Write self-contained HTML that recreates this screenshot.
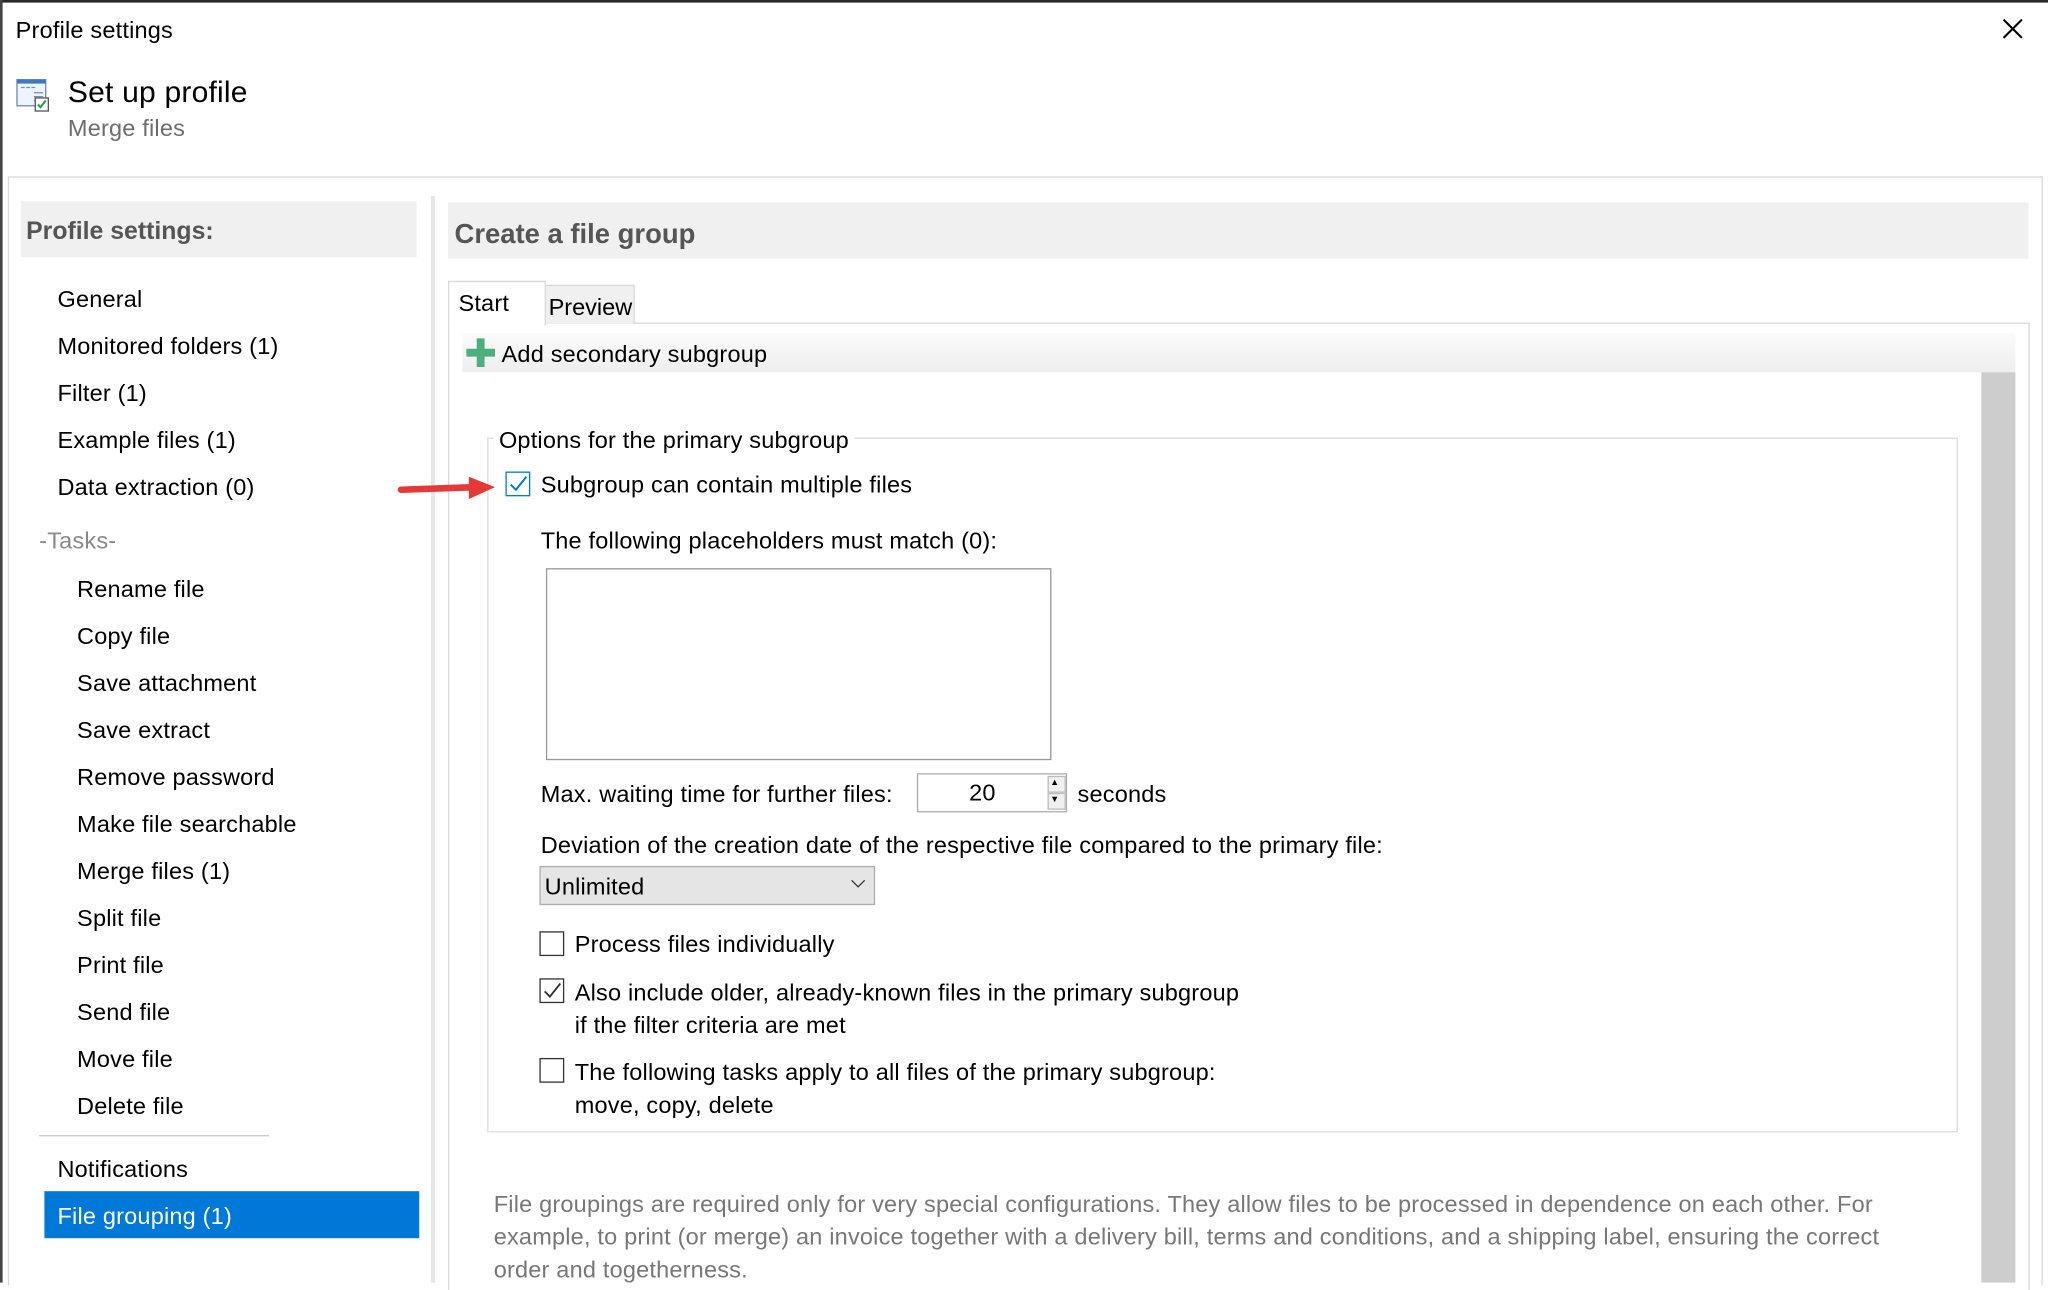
<!DOCTYPE html>
<html><head><meta charset="utf-8"><style>
html,body{margin:0;padding:0;width:2048px;height:1283px;overflow:hidden;background:#fff}
#w{position:absolute;left:0;top:0;width:1568px;height:982px;transform:scale(1.30612);transform-origin:0 0;font-family:"Liberation Sans",sans-serif;font-size:18px;letter-spacing:.15px;color:#000;background:#fff}
.a{position:absolute;white-space:nowrap;line-height:1}
.cb{position:absolute;width:17px;height:17px;border:1px solid #333;background:#fff}
</style></head><body><div id="w">
<div style="position:absolute;left:0;top:0;width:1568px;height:2px;background:#2b2b2b"></div>
<div style="position:absolute;left:0;top:0;width:2px;height:982px;background:#444"></div>
<div class="a" style="left:12px;top:14px">Profile settings</div>
<svg style="position:absolute;left:1532px;top:13px" width="18" height="18"><path d="M2 2L16 16M16 2L2 16" stroke="#000" stroke-width="1.6"/></svg>
<svg style="position:absolute;left:12px;top:60px" width="28" height="26"><rect x="1" y="1" width="22" height="20" fill="#eef4fb" stroke="#6a8bb5"/><rect x="1" y="1" width="22" height="3" fill="#3c78c3"/><path d="M4 7h3M8 7h3M12 7h3M14 11h7M14 14h7M14 17h5" stroke="#7a8ea8"/><rect x="15" y="15" width="10" height="10" fill="#fff" stroke="#555"/><path d="M17 20l2 2 4-5" stroke="#2a9d4b" stroke-width="1.6" fill="none"/></svg>
<div class="a" style="left:52px;top:59px;font-size:23px">Set up profile</div>
<div class="a" style="left:52px;top:89px;color:#6d6d6d">Merge files</div>
<div style="position:absolute;left:6px;top:135px;width:1556px;height:848px;border-top:1px solid #d9d9d9;border-left:1px solid #d9d9d9;border-right:1px solid #d9d9d9"></div>
<div style="position:absolute;left:16px;top:154px;width:303px;height:43px;background:#f0f0f0"></div>
<div class="a" style="left:20px;top:168px;font-size:19px;letter-spacing:0;font-weight:bold;color:#555">Profile settings:</div>
<div style="position:absolute;left:330px;top:150px;width:3px;height:832px;background:#e6e6e6"></div>
<div class="a" style="left:44px;top:220px">General</div>
<div class="a" style="left:44px;top:256px">Monitored folders (1)</div>
<div class="a" style="left:44px;top:292px">Filter (1)</div>
<div class="a" style="left:44px;top:328px">Example files (1)</div>
<div class="a" style="left:44px;top:364px">Data extraction (0)</div>
<div class="a" style="left:30px;top:405px;color:#888">-Tasks-</div>
<div class="a" style="left:59px;top:442px">Rename file</div>
<div class="a" style="left:59px;top:478px">Copy file</div>
<div class="a" style="left:59px;top:514px">Save attachment</div>
<div class="a" style="left:59px;top:550px">Save extract</div>
<div class="a" style="left:59px;top:586px">Remove password</div>
<div class="a" style="left:59px;top:622px">Make file searchable</div>
<div class="a" style="left:59px;top:658px">Merge files (1)</div>
<div class="a" style="left:59px;top:694px">Split file</div>
<div class="a" style="left:59px;top:730px">Print file</div>
<div class="a" style="left:59px;top:766px">Send file</div>
<div class="a" style="left:59px;top:802px">Move file</div>
<div class="a" style="left:59px;top:838px">Delete file</div>
<div style="position:absolute;left:30px;top:869px;width:176px;height:1px;background:#ccc"></div>
<div class="a" style="left:44px;top:886px">Notifications</div>
<div style="position:absolute;left:34px;top:912px;width:287px;height:36px;background:#0078d7"></div>
<div class="a" style="left:44px;top:922px;color:#fff">File grouping (1)</div>

<div style="position:absolute;left:343px;top:155px;width:1210px;height:43px;background:#f0f0f0"></div>
<div class="a" style="left:348px;top:169px;font-size:21px;letter-spacing:0;font-weight:bold;color:#555">Create a file group</div>
<div style="position:absolute;left:343px;top:247px;width:1209px;height:740px;border-top:1px solid #d9d9d9;border-left:1px solid #d9d9d9;border-right:1px solid #d9d9d9"></div>
<div style="position:absolute;left:416px;top:218px;width:68px;height:29px;background:#f0f0f0;border:1px solid #d9d9d9;border-bottom:none"></div>
<div style="position:absolute;left:343px;top:215px;width:73px;height:33px;background:#fff;border:1px solid #d9d9d9;border-bottom:none"></div>
<div class="a" style="left:351px;top:223px">Start</div>
<div class="a" style="left:420px;top:226px;letter-spacing:0">Preview</div>
<div style="position:absolute;left:354px;top:255px;width:1189px;height:30px;background:linear-gradient(#fbfbfb,#eeeeee)"></div>
<svg style="position:absolute;left:357px;top:259px" width="22" height="22"><path d="M8 0h6v8h8v6h-8v8H8v-8H0V8h8z" fill="#4caf7d"/></svg>
<div class="a" style="left:384px;top:262px">Add secondary subgroup</div>
<div style="position:absolute;left:1517px;top:285px;width:26px;height:697px;background:#cdcdcd"></div>
<div style="position:absolute;left:373px;top:335px;width:1124px;height:530px;border:1px solid #dcdcdc"></div>
<div class="a" style="left:378px;top:328px;background:#fff;padding:0 4px">Options for the primary subgroup</div>
<svg style="position:absolute;left:303px;top:363px" width="78" height="22"><path d="M4 12L60 10" stroke="#e53935" stroke-width="5" stroke-linecap="round"/><path d="M56 2L76 10L56 19z" fill="#e53935"/></svg>
<div class="cb" style="left:387px;top:361px;border:1.5px solid #0078d7"></div>
<svg style="position:absolute;left:389px;top:363px" width="16" height="16"><path d="M2 8l4 4 8-10" stroke="#0078d7" stroke-width="1.5" fill="none"/></svg>
<div class="a" style="left:414px;top:362px">Subgroup can contain multiple files</div>
<div class="a" style="left:414px;top:405px">The following placeholders must match (0):</div>
<div style="position:absolute;left:418px;top:435px;width:385px;height:145px;border:1px solid #999"></div>
<div class="a" style="left:414px;top:599px">Max. waiting time for further files:</div>
<div style="position:absolute;left:702px;top:592px;width:113px;height:28px;border:1px solid #adadad;background:#fff"></div>
<div class="a" style="left:742px;top:598px">20</div>
<div style="position:absolute;left:802px;top:594px;width:12px;height:11px;background:#f0f0f0;border:1px solid #bbb"></div>
<div style="position:absolute;left:802px;top:607px;width:12px;height:11px;background:#f0f0f0;border:1px solid #bbb"></div>
<div class="a" style="left:804px;top:596px;font-size:7px">▲</div>
<div class="a" style="left:804px;top:609px;font-size:7px">▼</div>
<div class="a" style="left:825px;top:599px">seconds</div>
<div class="a" style="left:414px;top:638px">Deviation of the creation date of the respective file compared to the primary file:</div>
<div style="position:absolute;left:413px;top:663px;width:255px;height:28px;background:#e5e5e5;border:1px solid #adadad"></div>
<div class="a" style="left:417px;top:670px">Unlimited</div>
<svg style="position:absolute;left:651px;top:673px" width="12" height="8"><path d="M1 1l5 5 5-5" stroke="#333" fill="none"/></svg>
<div class="cb" style="left:413px;top:713px"></div>
<div class="a" style="left:440px;top:714px">Process files individually</div>
<div class="cb" style="left:413px;top:749px"></div>
<svg style="position:absolute;left:415px;top:751px" width="16" height="16"><path d="M2 8l4 4 8-10" stroke="#333" stroke-width="1.4" fill="none"/></svg>
<div class="a" style="left:440px;top:751px">Also include older, already-known files in the primary subgroup</div>
<div class="a" style="left:440px;top:776px">if the filter criteria are met</div>
<div class="cb" style="left:413px;top:810px"></div>
<div class="a" style="left:440px;top:812px">The following tasks apply to all files of the primary subgroup:</div>
<div class="a" style="left:440px;top:837px">move, copy, delete</div>
<div class="a" style="left:378px;top:913px;color:#777">File groupings are required only for very special configurations. They allow files to be processed in dependence on each other. For</div>
<div class="a" style="left:378px;top:938px;color:#777">example, to print (or merge) an invoice together with a delivery bill, terms and conditions, and a shipping label, ensuring the correct</div>
<div class="a" style="left:378px;top:963px;color:#777">order and togetherness.</div>
</div></body></html>
